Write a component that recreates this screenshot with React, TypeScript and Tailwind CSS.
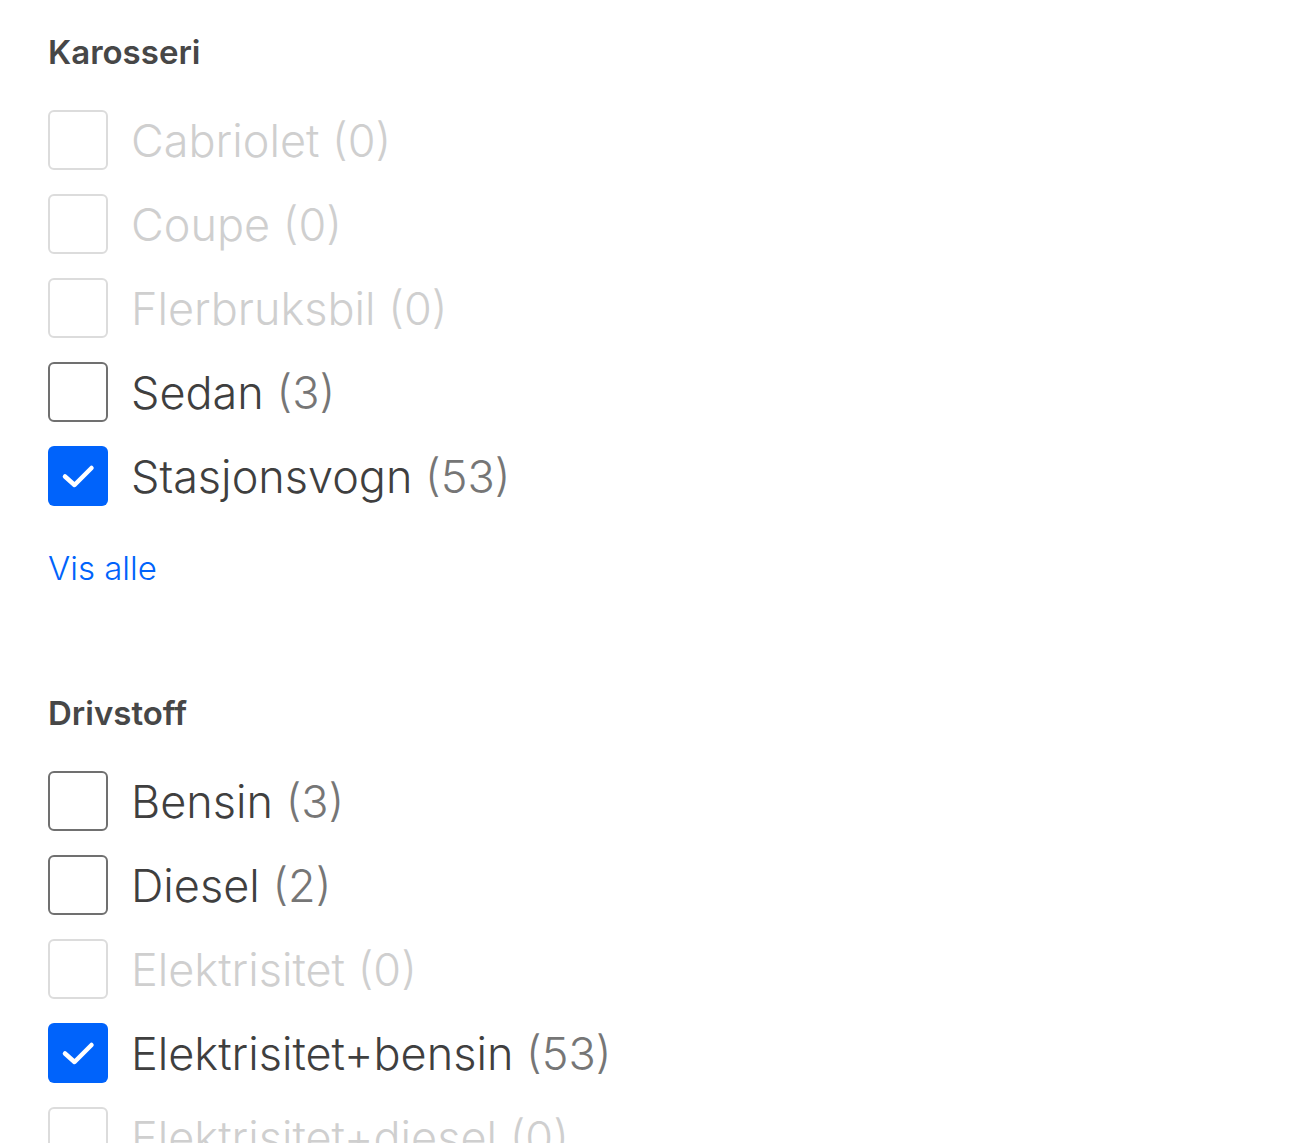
import React from 'react';

type Option = { label: string; count: number; checked?: boolean };

function Checkbox({ checked, disabled }: { checked?: boolean; disabled?: boolean }) {
  if (checked) {
    return (
      <span className="flex h-[60px] w-[60px] shrink-0 items-center justify-center rounded-[6px] bg-[#0063fb]">
        <svg width="60" height="60" viewBox="0 0 60 60" fill="none">
          <path d="M17 30.5 L26.5 39 L43.5 22" stroke="white" strokeWidth="4.5" strokeLinecap="round" strokeLinejoin="round" />
        </svg>
      </span>
    );
  }
  return (
    <span
      className={
        disabled
          ? 'h-[60px] w-[60px] shrink-0 rounded-[6px] border-2 border-[#dcdcdc] bg-white'
          : 'h-[60px] w-[60px] shrink-0 rounded-[6px] border-2 border-[#707070] bg-white'
      }
    />
  );
}

function FilterGroup({ title, options, showAll }: { title: string; options: Option[]; showAll?: boolean }) {
  return (
    <section>
      <h2 className="text-[33px] font-semibold leading-[40px] text-[#474747]">{title}</h2>
      <ul className="mt-[38px] flex flex-col gap-[24px]">
        {options.map((o) => {
          const disabled = o.count === 0;
          return (
            <li key={o.label} className="flex h-[60px] items-center gap-[23px]">
              <Checkbox checked={o.checked} disabled={disabled} />
              <span
                className={
                  disabled
                    ? 'whitespace-nowrap text-[45px] font-light leading-none text-[#cfcfcf]'
                    : 'whitespace-nowrap text-[45px] font-light leading-none text-[#3f3f3f]'
                }
              >
                {o.label}{' '}
                <span className={disabled ? 'text-[#cfcfcf]' : 'text-[#767676]'}>({o.count})</span>
              </span>
            </li>
          );
        })}
      </ul>
      {showAll && (
        <a href="#" className="mt-[42px] block text-[33px] font-light leading-[40px] text-[#0063fb]">
          Vis alle
        </a>
      )}
    </section>
  );
}

export default function App() {
  const body: Option[] = [
    { label: 'Cabriolet', count: 0 },
    { label: 'Coupe', count: 0 },
    { label: 'Flerbruksbil', count: 0 },
    { label: 'Sedan', count: 3 },
    { label: 'Stasjonsvogn', count: 53, checked: true },
  ];
  const fuel: Option[] = [
    { label: 'Bensin', count: 3 },
    { label: 'Diesel', count: 2 },
    { label: 'Elektrisitet', count: 0 },
    { label: 'Elektrisitet+bensin', count: 53, checked: true },
    { label: 'Elektrisitet+diesel', count: 0 },
  ];

  return (
    <div className="h-[1143px] overflow-hidden bg-white pl-[48px] pt-[32px] font-['Inter',sans-serif]">
      <FilterGroup title="Karosseri" options={body} showAll />
      <div className="mt-[105px]">
        <FilterGroup title="Drivstoff" options={fuel} />
      </div>
    </div>
  );
}
